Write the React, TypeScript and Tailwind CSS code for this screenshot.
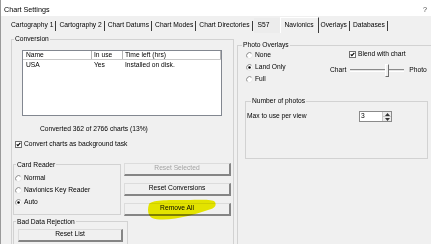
import React from "react";

const tabs = ["Cartography 1", "Cartography 2", "Chart Datums", "Chart Modes", "Chart Directories"];

function Radio({ checked }: { checked?: boolean }) {
  return (
    <svg width="7" height="7" viewBox="0 0 7 7" className="shrink-0">
      <circle cx="3.5" cy="3.5" r="3" fill="#ffffff" />
      <path d="M1.38 5.62 A3 3 0 0 1 5.62 1.38" fill="none" stroke="#7a7a7a" strokeWidth="0.9" />
      <path d="M5.62 1.38 A3 3 0 0 1 1.38 5.62" fill="none" stroke="#e2e2e2" strokeWidth="0.9" />
      {checked && <circle cx="3.5" cy="3.5" r="1.25" fill="#000000" />}
    </svg>
  );
}

function Check() {
  return (
    <svg width="7" height="7" viewBox="0 0 7 7" className="shrink-0">
      <rect x="0.5" y="0.5" width="6" height="6" fill="#ffffff" stroke="#707070" strokeWidth="1" />
      <path d="M1.7 3.3 L2.9 4.6 L5.3 1.9" fill="none" stroke="#000000" strokeWidth="1.1" />
    </svg>
  );
}

function Btn({ label, disabled, className = "" }: { label: string; disabled?: boolean; className?: string }) {
  return (
    <div
      className={`h-[13px] flex items-center justify-center bg-[#f0f0f0] border-t border-l border-t-[#dcdcdc] border-l-[#dcdcdc] border-r-2 border-b-2 border-r-[#858585] border-b-[#858585] ${
        disabled ? "text-[#a3a3a3]" : "text-black"
      } ${className}`}
    >
      {label}
    </div>
  );
}

function RadioRow({ label, checked }: { label: string; checked?: boolean }) {
  return (
    <div className="h-[12px] flex items-center gap-[2px]">
      <Radio checked={checked} />
      <span>{label}</span>
    </div>
  );
}

export default function App() {
  return (
    <div className="relative w-[431px] h-[244px] overflow-hidden bg-[#f0f0f0] border-l border-[#9a9a9a] font-['Liberation_Sans',Arial,sans-serif] text-[6.7px] leading-none text-black">
      {/* title bar */}
      <div className="h-[16px] bg-white flex items-center justify-between pl-[3px] pr-[4px] pt-[3px]">
        <span className="text-[7.2px]">Chart Settings</span>
        <span className="text-[7.2px] text-[#444]">?</span>
      </div>

      {/* tab strip */}
      <div className="h-[17px] flex items-end pl-[8px]">
        {tabs.map((t) => (
          <div key={t} className="h-[15px] flex items-center">
            <span className="px-[2px]">{t}</span>
            <span className="w-px h-[10px] bg-[#3c3c3c] mr-[1px]" />
          </div>
        ))}
        <div className="h-[15px] w-[26px] flex items-center pl-[4px] bg-[#ececec]">S57</div>
        <div className="h-[16px] flex items-center px-[4px] border-t border-l border-r border-t-white border-l-white border-r-[#3c3c3c]">
          Navionics
        </div>
        <div className="h-[15px] flex items-center">
          <span className="px-[2px]">Overlays</span>
          <span className="w-px h-[10px] bg-[#3c3c3c] mr-[1px]" />
        </div>
        <div className="h-[15px] flex items-center">
          <span className="px-[2px]">Databases</span>
          <span className="w-px h-[10px] bg-[#3c3c3c]" />
        </div>
      </div>

      {/* page */}
      <div className="flex pl-[10px] pt-[2px]">
        <fieldset className="w-[223px] h-[215px] shrink-0 border border-[#d2d2d2]">
          <legend className="ml-[2px] px-[1px] leading-[8px]">Conversion</legend>

          <div className="ml-[10px] mt-[7px] w-[200px] h-[66px] border border-[#828790] bg-white">
            <div className="flex h-[9px] border-b border-[#c9c9c9]">
              <div className="w-[69px] pl-[3px] flex items-center border-r border-[#b5b5b5]">Name</div>
              <div className="w-[31px] pl-[2px] flex items-center border-r border-[#b5b5b5]">In use</div>
              <div className="w-[98px] pl-[2px] flex items-center border-r border-[#b5b5b5]">Time left (hrs)</div>
            </div>
            <div className="flex h-[10px] items-center">
              <div className="w-[69px] pl-[3px]">USA</div>
              <div className="w-[31px] pl-[2px]">Yes</div>
              <div className="pl-[2px]">Installed on disk.</div>
            </div>
          </div>

          <div className="mt-[10px] pl-[28px]">Converted 362 of 2766 charts (13%)</div>

          <div className="mt-[8px] ml-[3px] flex items-center gap-[2px]">
            <Check />
            <span>Convert charts as background task</span>
          </div>

          <div className="flex mt-[13px] ml-[1px]">
            <fieldset className="w-[108px] h-[54px] shrink-0 border border-[#d2d2d2]">
              <legend className="ml-[2px] px-[1px] leading-[8px]">Card Reader</legend>
              <div className="mt-[4px] pl-[1px]">
                <RadioRow label="Normal" />
                <RadioRow label="Navionics Key Reader" />
                <RadioRow label="Auto" checked />
              </div>
            </fieldset>
            <div className="ml-[3px] mt-[2px] w-[107px] flex flex-col gap-[7px]">
              <Btn label="Reset Selected" disabled />
              <Btn label="Reset Conversions" />
              <Btn label="Remove All" />
            </div>
          </div>

          <fieldset className="ml-[1px] mt-[2px] w-[115px] h-[40px] border border-[#d2d2d2]">
            <legend className="ml-[2px] px-[1px] leading-[8px]">Bad Data Rejection</legend>
            <Btn label="Reset List" className="ml-[4px] mt-[3px] w-[105px]" />
          </fieldset>
        </fieldset>

        <fieldset className="ml-[3px] mt-[6px] w-[196px] h-[210px] shrink-0 border border-[#d2d2d2]">
          <legend className="ml-[4px] px-[1px] leading-[8px]">Photo Overlays</legend>
          <div className="flex">
            <div className="w-[92px] pl-[8px] shrink-0">
              <RadioRow label="None" />
              <RadioRow label="Land Only" checked />
              <RadioRow label="Full" />
            </div>
            <div className="flex flex-col">
              <div className="h-[10px] flex items-center gap-[2px] pl-[19px]">
                <Check />
                <span>Blend with chart</span>
              </div>
              <div className="mt-[5px] h-[13px] flex items-center">
                <span>Chart</span>
                <div className="relative ml-[4px] w-[54px] h-[3px] border-t border-b border-t-[#8a8a8a] border-b-white bg-[#e4e4e4]">
                  <div className="absolute left-[35px] top-[-6px] w-[4px] h-[13px] bg-[#f0f0f0] border-t border-l border-r border-b border-t-white border-l-white border-r-[#6e6e6e] border-b-[#6e6e6e]" />
                </div>
                <span className="ml-[5px]">Photo</span>
              </div>
            </div>
          </div>

          <fieldset className="ml-[7px] mt-[12px] w-[183px] h-[62px] border border-[#d2d2d2]">
            <legend className="ml-[5px] px-[1px] leading-[8px]">Number of photos</legend>
            <div className="mt-[6px] h-[11px] flex items-center pl-[1px]">
              <span className="w-[112px] shrink-0">Max to use per view</span>
              <div className="w-[33px] h-[11px] flex border border-[#8a8a8a] bg-white">
                <span className="flex-1 pl-[1px] flex items-center">3</span>
                <div className="w-[9px] flex flex-col border-l border-[#c8c8c8]">
                  <div className="flex-1 flex items-center justify-center bg-[#ececec] border-b border-[#c8c8c8]">
                    <svg width="5" height="3" viewBox="0 0 5 3"><path d="M0 3 L2.5 0 L5 3 Z" fill="#333" /></svg>
                  </div>
                  <div className="flex-1 flex items-center justify-center bg-[#ececec]">
                    <svg width="5" height="3" viewBox="0 0 5 3"><path d="M0 0 L2.5 3 L5 0 Z" fill="#333" /></svg>
                  </div>
                </div>
              </div>
            </div>
          </fieldset>
        </fieldset>
      </div>

      {/* yellow marker highlight */}
      <svg className="absolute left-[145px] top-[198px] mix-blend-multiply pointer-events-none" width="72" height="24" viewBox="0 0 72 24">
        <path
          d="M3 6 C6 2, 20 2, 40 2 C55 2, 66 1, 69 4 C71 8, 68 11, 62 12 C56 14, 50 16, 42 18 C30 21, 14 23, 6 20 C2 18, 1 12, 3 6 Z"
          fill="#f2f200"
        />
      </svg>
    </div>
  );
}
